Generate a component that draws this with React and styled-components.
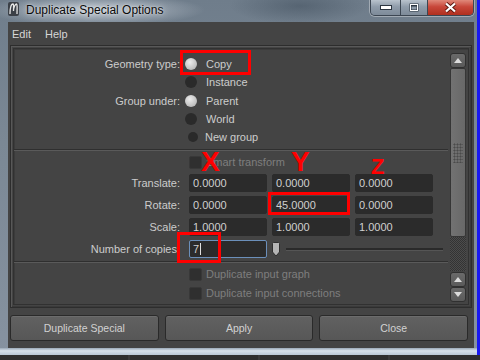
import React from "react";
import styled, { createGlobalStyle } from "styled-components";

// colours of the dark Maya panel
const panel = "#444444";
const field = "#2b2b2b";
const text = "#cccccc";
const dim = "#7e7e7e";

const GlobalStyle = createGlobalStyle`
  html, body {
    margin: 0;
    padding: 0;
    background: #2b2b2b;
  }
  body {
    width: 480px;
    height: 360px;
    overflow: hidden;
    font-family: "Liberation Sans", Arial, sans-serif;
  }
`;

const Screen = styled.div`
  position: relative;
  width: 480px;
  height: 360px;
  overflow: hidden;
  background: repeating-linear-gradient(
    to right,
    #2e2e2e 0 128px,
    #3a3a3a 128px 130px
  );
`;

// Aero glass frame
const Window = styled.div`
  box-sizing: border-box;
  height: 355px;
  display: flex;
  flex-direction: column;
  padding-left: 8px;
  padding-right: 3px;
  border-right: 3px solid #1818f2;
  background: radial-gradient(ellipse 110px 16px at 95px 10px, rgba(215, 222, 230, 0.75), transparent),
    radial-gradient(ellipse 70px 18px at 300px 6px, rgba(70, 84, 98, 0.6), transparent),
    linear-gradient(to bottom, #6f7d8b, #7b8895 40%, #8692a0);
`;

const TitleBar = styled.div`
  height: 22px;
  display: flex;
  align-items: flex-start;
`;

const AppIcon = styled.svg`
  margin-top: 2px;
  flex: none;
`;

const Title = styled.div`
  margin-left: 7px;
  line-height: 20px;
  font-size: 12px;
  color: #0a0a0a;
  text-shadow: 0 0 6px rgba(255, 255, 255, 0.8), 0 0 2px rgba(255, 255, 255, 0.6);
`;

const Controls = styled.div`
  margin-left: auto;
  display: flex;
  height: 15px;
  border: 1px solid #3c4652;
  border-top: none;
  border-radius: 0 0 5px 5px;
  overflow: hidden;
  box-shadow: 0 0 0 1px rgba(255, 255, 255, 0.35);
`;

const CtrlButton = styled.div`
  width: ${(p) => p.$w}px;
  display: flex;
  align-items: center;
  justify-content: center;
  border-left: ${(p) => (p.$first ? "none" : "1px solid #3c4652")};
  background: ${(p) =>
    p.$close
      ? "linear-gradient(to bottom, #e0897a, #c8473a 45%, #b0301f)"
      : "linear-gradient(to bottom, #b9c3cd, #8f9caa 45%, #7e8b99)"};
`;

const Client = styled.div`
  flex: 1;
  display: flex;
  flex-direction: column;
  background: ${panel};
  padding: 0 2px 7px 2px;
`;

const MenuBar = styled.div`
  height: 22px;
  display: flex;
  gap: 14px;
  padding: 2px 0 0 2px;
  box-sizing: border-box;
  line-height: 20px;
  font-size: 11px;
  color: #d6d6d6;
`;

const Frame = styled.div`
  margin-top: 1px;
  height: 263px;
  box-sizing: border-box;
  border: 1px solid #2d2d2d;
  box-shadow: inset 1px 1px 0 #585858, inset -1px -1px 0 #3a3a3a;
  padding: 2px;
  display: flex;
`;

const ScrollView = styled.div`
  flex: 1;
  display: flex;
  border: 1px solid #313131;
  box-shadow: inset 1px 1px 0 #3b3b3b;
  overflow: hidden;
`;

const Form = styled.div`
  flex: 1;
  padding-top: 6px;
  display: flex;
  flex-direction: column;
`;

const Row = styled.div`
  display: grid;
  grid-template-columns: 166px 1fr;
  column-gap: 8px;
  align-items: center;
  height: 18px;
  margin-top: ${(p) => p.$gap || 0}px;
  font-size: 11px;
  color: ${text};
`;

const Label = styled.div`
  text-align: right;
  white-space: nowrap;
  padding-right: ${(p) => p.$pad || 0}px;
`;

const Choice = styled.div`
  display: flex;
  align-items: center;
  white-space: nowrap;
  color: ${(p) => (p.$disabled ? dim : text)};
`;

const RadioDot = styled.span`
  width: ${(p) => p.$size}px;
  height: ${(p) => p.$size}px;
  border-radius: 50%;
  margin-left: ${(p) => (p.$size < 12 ? 0 : -3)}px;
  margin-right: ${(p) => (p.$size < 12 ? 7 : 9)}px;
  background: ${(p) =>
    p.$on
      ? "radial-gradient(circle at 40% 35%, #ececec, #c4c4c4 60%, #a8a8a8)"
      : "#2a2a2a"};
  flex: none;
`;

const CheckBox = styled.span`
  box-sizing: border-box;
  width: 13px;
  height: 13px;
  margin-left: 1px;
  margin-right: 4px;
  border-radius: 2px;
  background: #2f2f2f;
  border: 1px solid #383838;
  flex: none;
`;

const Separator = styled.div`
  margin: ${(p) => p.$top}px 2px ${(p) => p.$bottom}px 0;
  border-top: 1px solid #2f2f2f;
  border-bottom: 1px solid #5a5a5a;
`;

const Fields = styled.div`
  display: flex;
  gap: 5px;
  margin-left: 1px;
  align-items: center;
`;

const Field = styled.div`
  box-sizing: border-box;
  width: 78px;
  height: 18px;
  border-radius: 2px;
  background: ${field};
  border: 1px solid ${(p) => (p.$focus ? "#6b8fba" : field)};
  padding-left: 3px;
  line-height: 16px;
  color: #d0d0d0;
`;

const Caret = styled.span`
  display: inline-block;
  width: 1px;
  height: 12px;
  margin-left: 1px;
  vertical-align: -2px;
  background: #e0e0e0;
`;

const SliderThumb = styled.svg`
  margin-left: -1px;
  flex: none;
`;

const SliderTrack = styled.div`
  flex: 1;
  height: 2px;
  margin-right: 7px;
  background: #2a2a2a;
  border-bottom: 1px solid #555;
`;

const ScrollBar = styled.div`
  width: 16px;
  margin: 4px 2px 2px 0;
  display: flex;
  flex-direction: column;
`;

const ScrollButton = styled.div`
  box-sizing: border-box;
  height: 15px;
  margin-top: ${(p) => p.$gap || 0}px;
  border: 1px solid #303030;
  border-radius: 3px;
  background: linear-gradient(to bottom, #6a6a6a, #5a5a5a);
  display: flex;
  align-items: center;
  justify-content: center;
`;

const Thumb = styled.div`
  box-sizing: border-box;
  height: 169px;
  border: 1px solid #363636;
  border-radius: 2px;
  background: linear-gradient(to right, #727272, #686868);
  display: flex;
  align-items: center;
  justify-content: center;
`;

const Grip = styled.div`
  width: 10px;
  height: 20px;
  background: radial-gradient(circle, #4a4a4a 45%, transparent 50%) 0 0 / 3px 3px;
`;

const Track = styled.div`
  height: 34px;
  background: repeating-conic-gradient(#333 0 25%, #4c4c4c 0 50%) 0 0 / 2px 2px;
`;

const ButtonRow = styled.div`
  margin-top: 7px;
  display: flex;
  gap: 6px;
  padding-right: 4px;
`;

const Button = styled.div`
  flex: 1;
  box-sizing: border-box;
  height: 26px;
  border: 1px solid #2a2a2a;
  border-radius: 3px;
  background: linear-gradient(to bottom, #616161, #575757);
  box-shadow: inset 0 1px 0 #6c6c6c;
  display: flex;
  align-items: center;
  justify-content: center;
  font-size: 10.5px;
  color: #d2d2d2;
`;

const BottomGlass = styled.div`
  height: 7px;
  margin: 0 -3px 0 -8px;
  background: linear-gradient(to bottom, #9aa8b6, #d6e0ea 40%, #b8c6d4);
`;

// red markings drawn over the screenshot
const Mark = styled.div`
  position: absolute;
  box-sizing: border-box;
  left: ${(p) => p.$x}px;
  top: ${(p) => p.$y}px;
  width: ${(p) => p.$w}px;
  height: ${(p) => p.$h}px;
  border: 3px solid #ff0000;
`;

const Letter = styled.div`
  position: absolute;
  left: ${(p) => p.$x}px;
  top: ${(p) => p.$y}px;
  font-size: ${(p) => p.$size}px;
  line-height: 1;
  font-weight: bold;
  color: #ff0000;
`;

const Arrow = ({ down }) => (
  <svg width="8" height="5" viewBox="0 0 8 5">
    <path d={down ? "M0 0H8L4 5Z" : "M0 5H8L4 0Z"} fill="#dcdcdc" />
  </svg>
);

const Radio = ({ on, size = 12, children }) => (
  <Choice>
    <RadioDot $on={on} $size={size} />
    {children}
  </Choice>
);

const Check = ({ children }) => (
  <Choice $disabled>
    <CheckBox />
    {children}
  </Choice>
);

const App = () => (
  <Screen>
    <GlobalStyle />
    <Window>
      <TitleBar>
        <AppIcon width="11" height="14" viewBox="0 0 11 14">
          <rect x="0" y="0" width="11" height="14" rx="2" fill="#3b4047" />
          <path
            d="M2 12 C2 6 3 2 5 2 C6 2 5.5 7 5.5 9 C5.5 6 7 2 8.5 2 C9.5 2 9 8 9 12"
            fill="none"
            stroke="#e6e6e6"
            strokeWidth="1.3"
          />
        </AppIcon>
        <Title>Duplicate Special Options</Title>
        <Controls>
          <CtrlButton $w={29} $first>
            <svg width="12" height="5" viewBox="0 0 12 5">
              <rect x="0.5" y="0.5" width="11" height="4" fill="#fff" stroke="#2c3641" />
            </svg>
          </CtrlButton>
          <CtrlButton $w={26}>
            <svg width="10" height="9" viewBox="0 0 10 9">
              <rect x="0.5" y="0.5" width="9" height="8" fill="#2c3641" />
              <rect x="1.5" y="1.5" width="7" height="6" fill="none" stroke="#fff" />
              <rect x="2.5" y="3.5" width="5" height="3" fill="#8d9aa8" />
            </svg>
          </CtrlButton>
          <CtrlButton $w={45} $close>
            <svg width="13" height="11" viewBox="0 0 13 11">
              <path d="M2 1.5L11 9.5M11 1.5L2 9.5" stroke="#5a1a12" strokeWidth="4" />
              <path d="M2 1.5L11 9.5M11 1.5L2 9.5" stroke="#fff" strokeWidth="2.2" />
            </svg>
          </CtrlButton>
        </Controls>
      </TitleBar>

      <Client>
        <MenuBar>
          <span>Edit</span>
          <span>Help</span>
        </MenuBar>

        <Frame>
          <ScrollView>
            <Form>
              <Row>
                <Label>Geometry type:</Label>
                <Radio on>Copy</Radio>
              </Row>
              <Row>
                <span />
                <Radio>Instance</Radio>
              </Row>
              <Row $gap={1}>
                <Label>Group under:</Label>
                <Radio on>Parent</Radio>
              </Row>
              <Row>
                <span />
                <Radio>World</Radio>
              </Row>
              <Row>
                <span />
                <Radio size={10}>New group</Radio>
              </Row>

              <Separator $top={3} $bottom={2} />

              <Row>
                <span />
                <Check>Smart transform</Check>
              </Row>
              <Row $gap={3}>
                <Label>Translate:</Label>
                <Fields>
                  <Field>0.0000</Field>
                  <Field>0.0000</Field>
                  <Field>0.0000</Field>
                </Fields>
              </Row>
              <Row $gap={4}>
                <Label>Rotate:</Label>
                <Fields>
                  <Field>0.0000</Field>
                  <Field>45.0000</Field>
                  <Field>0.0000</Field>
                </Fields>
              </Row>
              <Row $gap={4}>
                <Label>Scale:</Label>
                <Fields>
                  <Field>1.0000</Field>
                  <Field>1.0000</Field>
                  <Field>1.0000</Field>
                </Fields>
              </Row>
              <Row $gap={4}>
                <Label $pad={3}>Number of copies</Label>
                <Fields>
                  <Field $focus>
                    7<Caret />
                  </Field>
                  <SliderThumb width="10" height="15" viewBox="0 0 10 15">
                    <path
                      d="M1.5 1.5 Q1.5 0.5 2.5 0.5 H7.5 Q8.5 0.5 8.5 1.5 V10 L5 14 L1.5 10 Z"
                      fill="#b4b4b4"
                      stroke="#2e2e2e"
                    />
                  </SliderThumb>
                  <SliderTrack />
                </Fields>
              </Row>

              <Separator $top={3} $bottom={2} />

              <Row>
                <span />
                <Check>Duplicate input graph</Check>
              </Row>
              <Row $gap={1}>
                <span />
                <Check>Duplicate input connections</Check>
              </Row>
            </Form>

            <ScrollBar>
              <ScrollButton>
                <Arrow />
              </ScrollButton>
              <Thumb>
                <Grip />
              </Thumb>
              <Track />
              <ScrollButton $gap={1}>
                <Arrow />
              </ScrollButton>
              <ScrollButton>
                <Arrow down />
              </ScrollButton>
            </ScrollBar>
          </ScrollView>
        </Frame>

        <ButtonRow>
          <Button>Duplicate Special</Button>
          <Button>Apply</Button>
          <Button>Close</Button>
        </ButtonRow>
      </Client>
      <BottomGlass />
    </Window>

    <Mark $x={180} $y={50} $w={71} $h={25} />
    <Mark $x={268} $y={192} $w={82} $h={23} />
    <Mark $x={177} $y={232} $w={44} $h={31} />
    <Letter $x={201} $y={148} $size={28}>X</Letter>
    <Letter $x={291} $y={148} $size={28}>Y</Letter>
    <Letter $x={371} $y={156} $size={22}>Z</Letter>
  </Screen>
);

export default App;
